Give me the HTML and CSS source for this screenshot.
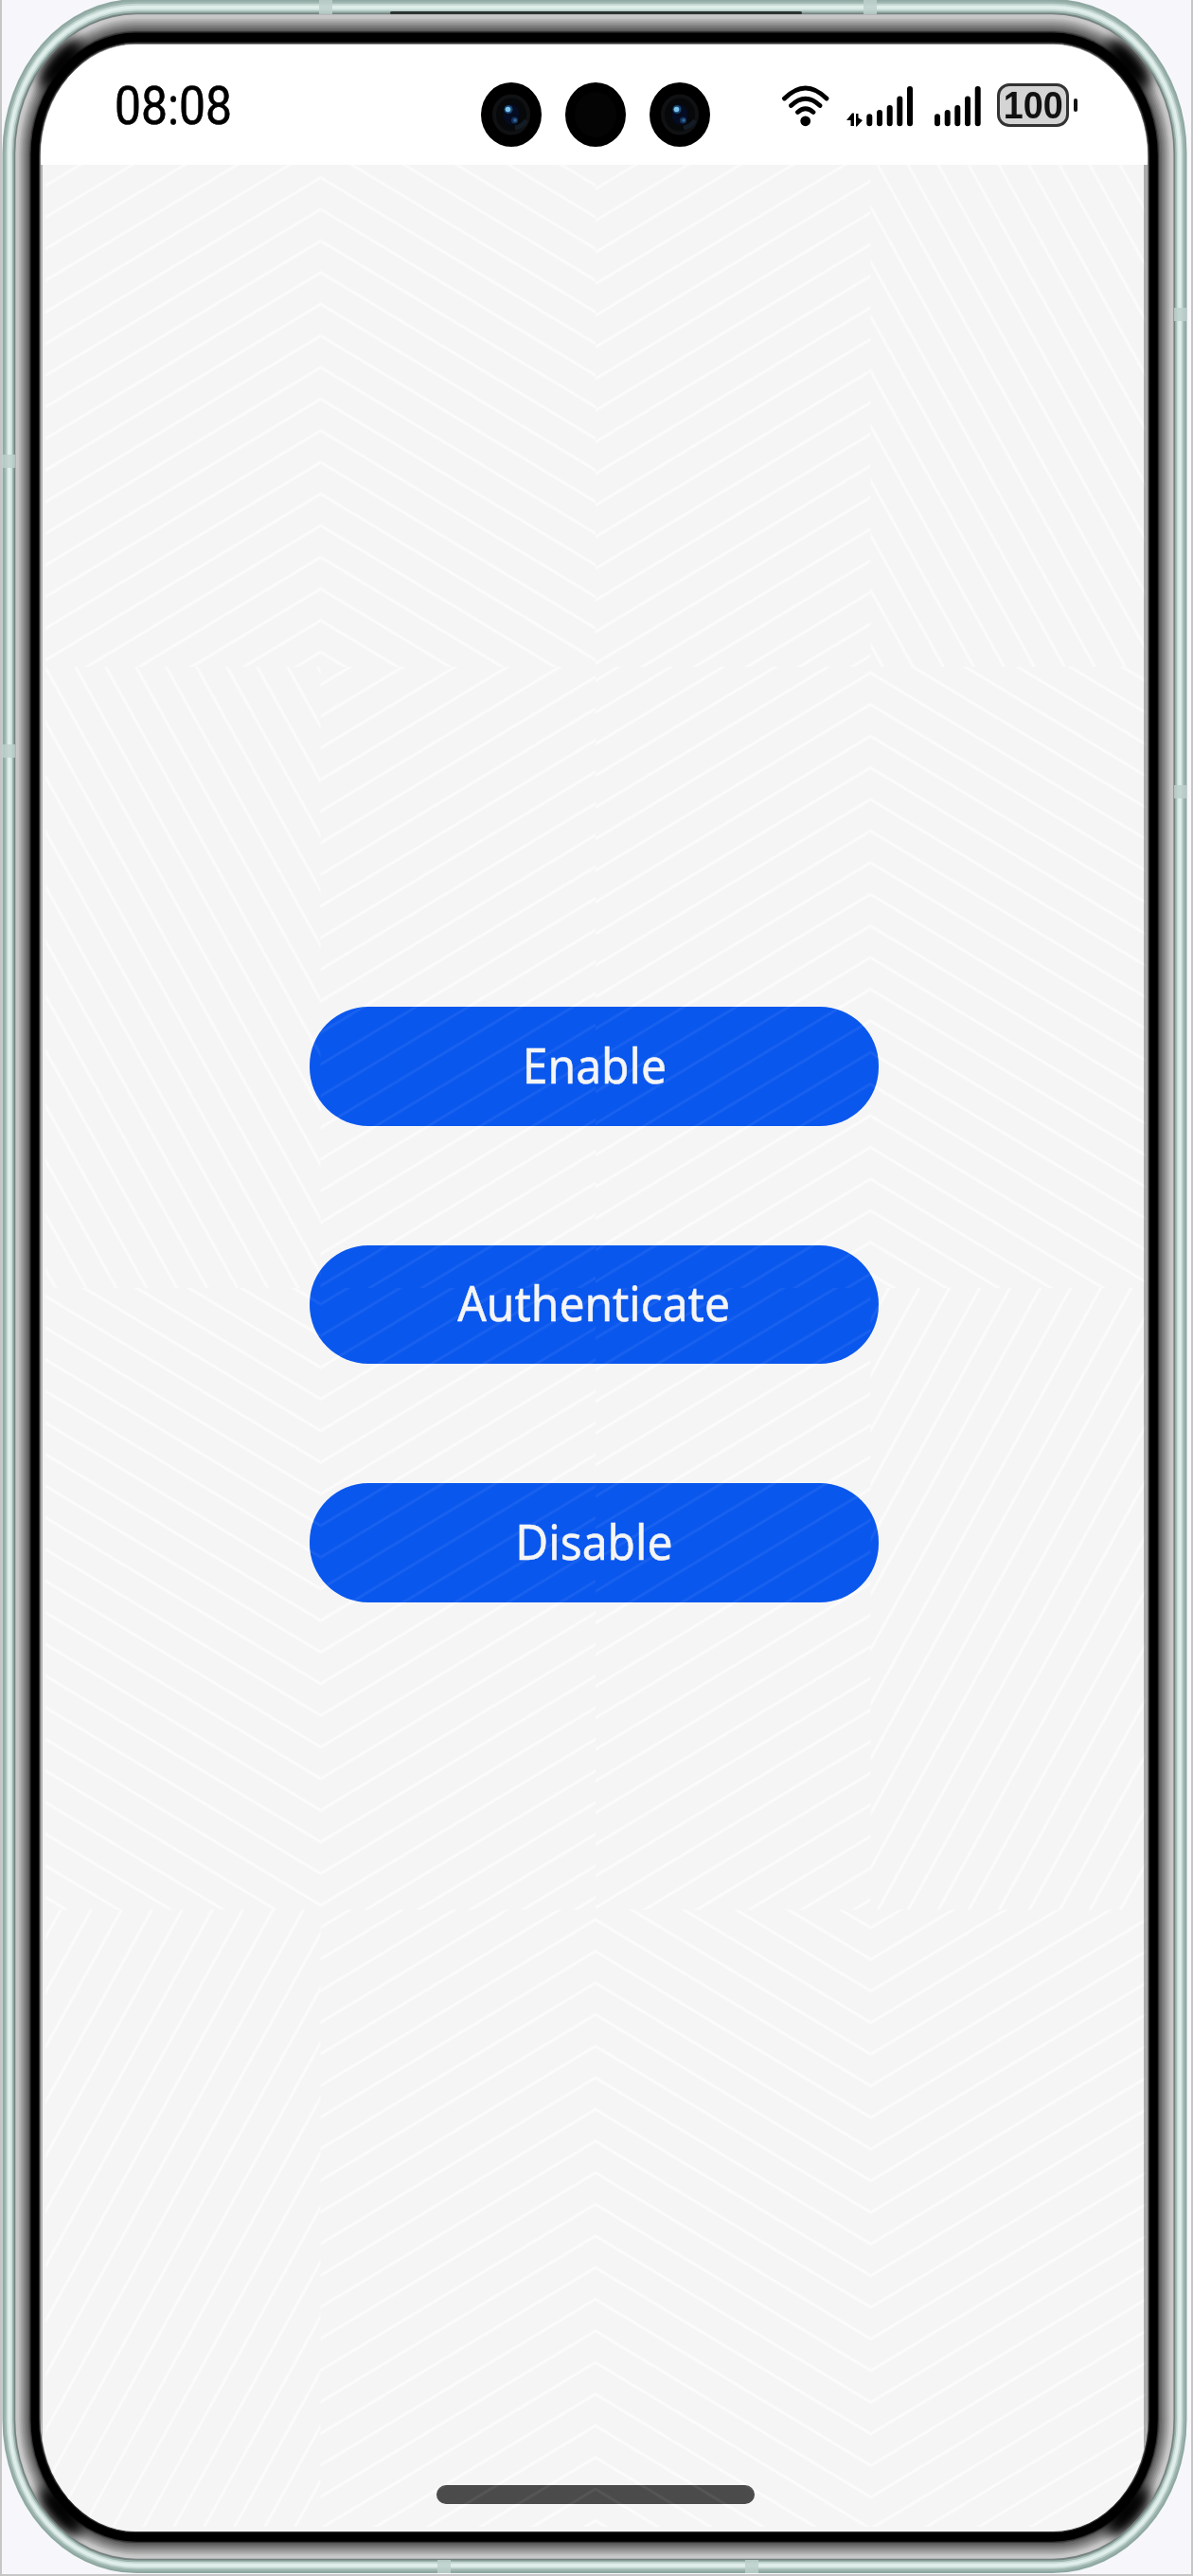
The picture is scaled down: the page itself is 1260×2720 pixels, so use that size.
FILE: index.html
```html
<!DOCTYPE html>
<html lang="en">
<head>
<meta charset="utf-8">
<title>Authentication</title>
<link rel="stylesheet" href="styles.css">
</head>
<body>
<main class="phone">
  <svg class="frame" viewBox="0 0 1260 2720" aria-hidden="true">
    <defs>
      <filter id="soft" x="-50%" y="-50%" width="200%" height="200%"><feGaussianBlur stdDeviation="7"/></filter>
      <clipPath id="bezel"><rect class="ring" style="--t:.34"/></clipPath>
    </defs>
    <rect class="ring" style="--t:0" fill="#8fa8a1"/>
    <rect class="ring" style="--t:.05" fill="#9fb6b0"/>
    <rect class="ring" style="--t:.1" fill="#c3d6d1"/>
    <rect class="ring" style="--t:.14" fill="#dfeeea"/>
    <rect class="ring" style="--t:.22" fill="#c9dcd7"/>
    <rect class="ring" style="--t:.26" fill="#9cb2ac"/>
    <rect class="ring" style="--t:.3" fill="#74827f"/>
    <rect class="ring" style="--t:.34" fill="#c9c7c8"/>
    <rect class="ring" style="--t:.4" fill="#c3c3c3"/>
    <rect class="ring" style="--t:.44" fill="#b3b3b3"/>
    <rect class="ring" style="--t:.48" fill="#a3a3a3"/>
    <rect class="ring" style="--t:.52" fill="#949494"/>
    <rect class="ring" style="--t:.56" fill="#858585"/>
    <rect class="ring" style="--t:.6" fill="#777"/>
    <rect class="ring" style="--t:.64" fill="#686868"/>
    <rect class="ring" style="--t:.68" fill="#565656"/>
    <rect class="ring" style="--t:.71" fill="#333"/>
    <rect class="ring" style="--t:.74" fill="#000"/>
    <rect class="ring" style="--t:.95" fill="#333"/>
    <rect class="ring" style="--t:.98" fill="#8a8a8a"/>
    <g clip-path="url(#bezel)"><g fill="#000" filter="url(#soft)">
      <ellipse cx="64" cy="67" rx="14" ry="32" transform="rotate(40 64 67)"/>
      <ellipse cx="1192" cy="67" rx="14" ry="32" transform="rotate(-40 1192 67)"/>
      <ellipse cx="64" cy="2652" rx="14" ry="32" transform="rotate(-40 64 2652)"/>
      <ellipse cx="1192" cy="2652" rx="14" ry="32" transform="rotate(40 1192 2652)"/>
    </g></g>
    <rect x="412" y="12" width="435" height="3" rx="1.5" fill="#2c3533"/>
    <g class="antenna">
      <rect x="337" y="0" width="14" height="15"/><rect x="912" y="0" width="14" height="15"/>
      <rect x="2" y="480" width="14" height="14"/><rect x="2" y="786" width="14" height="14"/>
      <rect x="1240" y="325" width="13" height="14"/><rect x="1240" y="829" width="13" height="14"/>
      <rect x="462" y="2703" width="14" height="14"/><rect x="787" y="2703" width="14" height="14"/>
    </g>
  </svg>

  <section class="screen">
    <svg class="watermark" viewBox="43 47 1169 2626" aria-hidden="true">
      <defs>
        <g id="rise"><path d="M-2 34.6L57.3 -1.2M-2 1.2L2 -1.2M53.3 34.6L57.3 32.2"/></g>
        <g id="fall"><path d="M-2 -1.2L57.3 34.6M-2 32.2L2 34.6M53.3 -1.2L57.3 1.2"/></g>
        <g id="climb"><path d="M-1 59.6L33 -1.8M-1 1.8L1 -1.8M31 59.6L33 56"/></g>
        <g id="drop"><path d="M-1 -1.8L33 59.6M-1 56L1 59.6M31 -1.8L33 1.8"/></g>
        <pattern id="r0c0" x="338.7" y="421.3" width="55.3" height="33.4" patternUnits="userSpaceOnUse"><use href="#rise"/></pattern>
        <pattern id="r0c1" x="338.7" y="421.3" width="55.3" height="33.4" patternUnits="userSpaceOnUse"><use href="#fall"/></pattern>
        <pattern id="r0c2" x="919.3" y="391.6" width="55.3" height="33.4" patternUnits="userSpaceOnUse"><use href="#rise"/></pattern>
        <pattern id="r0c3" x="919.3" y="391.4" width="32" height="57.8" patternUnits="userSpaceOnUse"><use href="#drop"/></pattern>
        <pattern id="r1c0" x="79.6" y="704" width="32" height="57.8" patternUnits="userSpaceOnUse"><use href="#drop"/></pattern>
        <pattern id="r1c1" x="338.7" y="756.5" width="55.3" height="33.4" patternUnits="userSpaceOnUse"><use href="#rise"/></pattern>
        <pattern id="r1c2" x="919.3" y="743.8" width="55.3" height="33.4" patternUnits="userSpaceOnUse"><use href="#rise"/></pattern>
        <pattern id="r1c3" x="919.3" y="743.8" width="55.3" height="33.4" patternUnits="userSpaceOnUse"><use href="#fall"/></pattern>
        <pattern id="r2c0" x="338.7" y="1778" width="55.3" height="33.4" patternUnits="userSpaceOnUse"><use href="#fall"/></pattern>
        <pattern id="r2c1" x="338.7" y="1778" width="55.3" height="33.4" patternUnits="userSpaceOnUse"><use href="#rise"/></pattern>
        <pattern id="r2c2" x="919.3" y="1805.5" width="55.3" height="33.4" patternUnits="userSpaceOnUse"><use href="#rise"/></pattern>
        <pattern id="r2c3" x="919.7" y="1914.5" width="32" height="57.8" patternUnits="userSpaceOnUse"><use href="#climb"/></pattern>
        <pattern id="r3c0" x="336.7" y="2565" width="32" height="57.8" patternUnits="userSpaceOnUse"><use href="#climb"/></pattern>
        <pattern id="r3c1" x="338" y="2570" width="55.3" height="33.4" patternUnits="userSpaceOnUse"><use href="#rise"/></pattern>
        <pattern id="r3c2" x="919.7" y="2570" width="55.3" height="33.4" patternUnits="userSpaceOnUse"><use href="#fall"/></pattern>
        <pattern id="r3c3" x="919.7" y="2570" width="55.3" height="33.4" patternUnits="userSpaceOnUse"><use href="#rise"/></pattern>
      </defs>
      <g id="cells" stroke="none">
        <rect x="48" y="174" width="290.5" height="530" fill="url(#r0c0)"/>
        <rect x="338.5" y="174" width="290.5" height="530" fill="url(#r0c1)"/>
        <rect x="629" y="174" width="290.5" height="530" fill="url(#r0c2)"/>
        <rect x="919.5" y="174" width="290.5" height="530" fill="url(#r0c3)"/>
        <rect x="48" y="704" width="290.5" height="656" fill="url(#r1c0)"/>
        <rect x="338.5" y="704" width="290.5" height="656" fill="url(#r1c1)"/>
        <rect x="629" y="704" width="290.5" height="656" fill="url(#r1c2)"/>
        <rect x="919.5" y="704" width="290.5" height="656" fill="url(#r1c3)"/>
        <rect x="48" y="1360" width="290.5" height="656.5" fill="url(#r2c0)"/>
        <rect x="338.5" y="1360" width="290.5" height="656.5" fill="url(#r2c1)"/>
        <rect x="629" y="1360" width="290.5" height="656.5" fill="url(#r2c2)"/>
        <rect x="919.5" y="1360" width="290.5" height="656.5" fill="url(#r2c3)"/>
        <rect x="48" y="2016.5" width="290.5" height="651.5" fill="url(#r3c0)"/>
        <rect x="338.5" y="2016.5" width="290.5" height="651.5" fill="url(#r3c1)"/>
        <rect x="629" y="2016.5" width="290.5" height="651.5" fill="url(#r3c2)"/>
        <rect x="919.5" y="2016.5" width="290.5" height="651.5" fill="url(#r3c3)"/>
      </g>
    </svg>

    <header class="status">
      <time class="clock">08:08</time>
      <div class="cameras">
        <svg width="242" height="68" viewBox="0 0 242 68" aria-hidden="true">
          <defs>
            <g id="lens">
              <ellipse rx="32" ry="34" fill="#000"/>
              <ellipse rx="18" ry="19.5" fill="#07080a" stroke="#101113" stroke-width="4"/>
              <ellipse rx="8.5" ry="11" fill="#050b20"/>
              <path d="M4 14A18 18 0 0 0 16 6" fill="none" stroke="#131b24" stroke-width="5"/>
              <circle cx="-3" cy="-5.5" r="4.6" fill="#17456e"/>
              <circle cx="-3.5" cy="-5.5" r="2.8" fill="#7cc3ec"/>
              <circle cx="3.5" cy="6" r="3.6" fill="#12305a"/>
              <circle cx="4" cy="6" r="1.8" fill="#346a98"/>
            </g>
          </defs>
          <use href="#lens" x="32" y="34"/>
          <ellipse cx="121" cy="34" rx="32" ry="34" fill="#000"/>
          <ellipse cx="121" cy="34" rx="22" ry="24" fill="#040404"/>
          <use href="#lens" x="210" y="34"/>
        </svg>
      </div>
      <div class="indicators">
        <svg class="wifi" width="52" height="46" viewBox="825 87 52 46" aria-label="Wi-Fi">
          <path d="M828.5 103Q850.7 81 873 103M835.5 110.5Q850.7 96 866 110.5M842.5 117.5Q850.7 110 859 117.5" fill="none" stroke="#000" stroke-width="4.8" stroke-linecap="round"/>
          <circle cx="850.7" cy="126.8" r="5.4"/>
        </svg>
        <svg class="cell-data" width="71" height="46" viewBox="894 87 71 46" aria-label="Mobile data">
          <path d="M894 126l6-7.500h2V132h-3.500v-6zM904 119h2.500v4.500l4.500 2.500-6 6.500h-1z"/>
          <path class="bars" d="M918.3 122.3v7M929 118v11.3M939.7 113v16.3M950.3 103.5v25.8M961 93v36.3"/>
        </svg>
        <svg class="cell" width="51" height="46" viewBox="986 87 51 46" aria-label="Signal">
          <path class="bars" d="M990 122.3v7M1000.7 118v11.3M1011.3 113v16.3M1022 103.5v25.8M1032.7 93v36.3"/>
        </svg>
        <div class="battery"><span>100</span></div>
        <i class="nub"></i>
      </div>
    </header>

    <div class="actions">
      <button class="action"><span>Enable</span></button>
      <button class="action"><span>Authenticate</span></button>
      <button class="action"><span>Disable</span></button>
    </div>

    <footer class="nav"><i class="home"></i></footer>

    <svg class="watermark tint" viewBox="43 47 1169 2626" aria-hidden="true"><use href="#cells"/></svg>
  </section>
</main>
</body>
</html>
```
FILE: styles.css
```css
* { box-sizing: border-box; }

body {
  margin: 0;
  background: #f7f7fb;
  font-family: "Noto Sans", sans-serif;
}

.phone {
  position: relative;
  display: flex;
  width: 1260px;
  height: 2720px;
  padding: 47px 46px 45px 41px;
  border: solid #c6c6c6;
  border-width: 0 2px 2px 2px;
  overflow: hidden;
}

/* device bezel: concentric bands, --t runs from the outer edge (0) to the glass (1) */
.frame {
  position: absolute;
  left: -2px;
  top: 0;
  width: 1260px;
  height: 2720px;
}

.ring {
  x: calc(2.5px + 40.5px * var(--t));
  y: calc(-1px + 48px * var(--t));
  width: calc(1251px - 82px * var(--t));
  height: calc(2718px - 93px * var(--t));
  rx: calc(142px - 42px * var(--t));
  ry: calc(162px - 44px * var(--t));
}

.antenna { fill: #bdd0cb; opacity: .85; }

.screen {
  position: relative;
  flex: 1;
  display: flex;
  flex-direction: column;
  background: #f5f5f5;
  border-radius: 100px / 118px;
  overflow: hidden;
}

.watermark {
  position: absolute;
  left: 0;
  top: 0;
  width: 1169px;
  height: 2626px;
  fill: none;
  stroke: #fff;
  stroke-width: 2.8;
  opacity: .6;
  pointer-events: none;
}

.tint { opacity: .06; }

.status {
  position: relative;
  flex: none;
  display: flex;
  align-items: center;
  justify-content: space-between;
  height: 127px;
  padding: 0 74px 0 78px;
  background: #fff;
}

.clock {
  padding-top: 3px;
  font: 400 56px/60px Roboto, sans-serif;
  color: #000;
  -webkit-text-stroke: .6px #000;
  transform: scaleX(.89);
  transform-origin: left;
}

.cameras {
  position: absolute;
  left: 465px;
  top: 40px;
}

.indicators { display: flex; align-items: center; }
.wifi { margin-right: 17px; }
.cell-data { margin-right: 21px; }
.cell { margin-right: 16px; }

.bars {
  fill: none;
  stroke: #000;
  stroke-width: 6;
  stroke-linecap: round;
}

.battery {
  display: flex;
  align-items: center;
  justify-content: center;
  width: 76px;
  height: 46px;
  border: 3.5px solid #333;
  border-radius: 13px;
  background: #d4d4d4;
  font: 700 41px/40px "Liberation Sans", sans-serif;
  color: #111;
}

.battery span { transform: scaleX(.92); }

.nub {
  width: 4px;
  height: 14px;
  margin-left: 5px;
  border-radius: 2px;
  background: #111;
}

/* the thin grey lines are the glass edge beside the app content */
.actions {
  position: relative;
  flex: 1;
  display: flex;
  flex-direction: column;
  align-items: center;
  gap: 126px;
  padding-top: 889px;
  box-shadow: inset -4px 0 #adadad, inset 2px 0 #b5b5b5;
}

.action {
  width: 601px;
  height: 125.5px;
  padding: 0 0 4px;
  border: 0;
  border-radius: 62px;
  background: #0a57ee;
  color: #f5f5f5;
  font: 400 51px/70px "Noto Sans", sans-serif;
  -webkit-text-stroke: .5px #f5f5f5;
}

.action span { display: inline-block; transform: scaleX(.94); }

.nav {
  position: relative;
  flex: none;
  display: flex;
  justify-content: center;
  padding: 0 0 29px 2px;
}

.home {
  width: 336px;
  height: 20px;
  border-radius: 10px;
  background: #4b4b4b;
}
```
